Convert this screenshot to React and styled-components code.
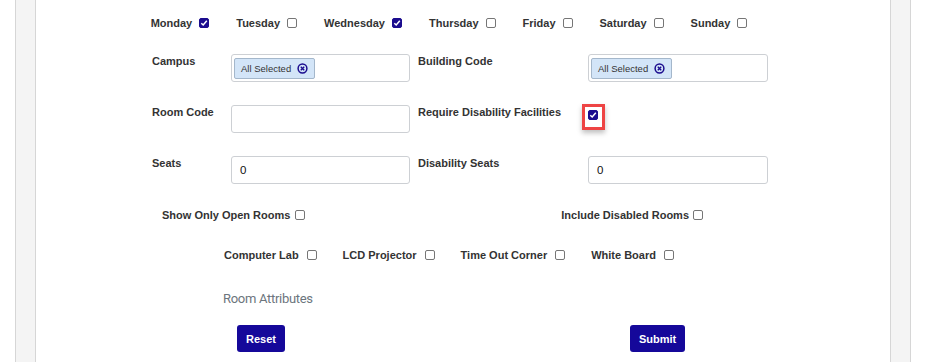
import React from 'react'
import styled, { createGlobalStyle } from 'styled-components'

const GlobalStyle = createGlobalStyle`
  body {
    margin: 0;
    background: #fff;
    font-family: "Liberation Sans", Arial, sans-serif;
  }
`

const Page = styled.div`
  padding: 0 16px 0 15px;
  height: 362px;
  overflow: hidden;
`

const Frame = styled.div`
  height: 100%;
  background: #f4f4f4;
  border-left: 1px solid #d6d6d6;
  border-right: 1px solid #d6d6d6;
  padding: 0 19px;
`

const Card = styled.div`
  height: 100%;
  background: #fff;
  border-left: 1px solid #d6d6d6;
  border-right: 1px solid #d6d6d6;
  padding-top: 15px;
  box-sizing: border-box;
`

const Form = styled.div`
  width: 638px;
  margin-left: 94px;
  display: flex;
  flex-direction: column;
`

const CheckRow = styled.div`
  display: flex;
  align-items: center;
  justify-content: ${({ $spread }) => ($spread ? 'space-between' : 'center')};
  gap: ${({ $gap }) => $gap || 27}px;
  height: 16px;
  margin-top: ${({ $top }) => $top || 0}px;
  padding: ${({ $pad }) => $pad || '0'};
`

const CheckItem = styled.label`
  display: flex;
  align-items: center;
  gap: ${({ $gap }) => $gap || 7}px;
  font-size: 11px;
  font-weight: bold;
  color: #333;
  white-space: nowrap;
`

const Box = styled.span`
  position: relative;
  display: inline-flex;
  align-items: center;
  justify-content: center;
  width: 10px;
  height: 10px;
  box-sizing: border-box;
  border-radius: 2px;
  border: 1px solid ${({ $checked }) => ($checked ? '#1b0c8e' : '#767676')};
  background: ${({ $checked }) => ($checked ? '#1b0c8e' : '#fff')};
`

const Highlight = styled.span`
  position: absolute;
  left: -7px;
  top: -7px;
  width: 23px;
  height: 26px;
  box-sizing: border-box;
  border: 3px solid #ee4444;
  box-shadow: 0 3px 5px rgba(0, 0, 0, 0.25);
`

const Checkbox = ({ checked, highlight }) => (
  <Box $checked={checked}>
    {checked && (
      <svg width="8" height="8" viewBox="0 0 8 8">
        <path d="M1.3 4.2 L3.2 6 L6.8 1.8" fill="none" stroke="#fff" strokeWidth="1.5" />
      </svg>
    )}
    {highlight && <Highlight />}
  </Box>
)

const Fields = styled.div`
  display: grid;
  grid-template-columns: 79px 179px 178px 180px;
  grid-template-rows: 28px 28px 28px;
  row-gap: 23px;
  padding-left: 22px;
  margin-top: 23px;
`

const FieldLabel = styled.div`
  font-size: 11px;
  font-weight: bold;
  color: #333;
  padding-top: 1px;
  padding-left: ${({ $inset }) => ($inset ? 8 : 0)}px;
`

const Input = styled.div`
  box-sizing: border-box;
  height: 28px;
  border: 1px solid #cdd0d4;
  border-radius: 3px;
  display: flex;
  align-items: center;
  padding: 0 ${({ $chip }) => ($chip ? 2 : 8)}px;
  font-size: 11.5px;
  color: #111;
`

const Chip = styled.span`
  display: inline-flex;
  align-items: center;
  gap: 6px;
  height: 21px;
  box-sizing: border-box;
  padding: 0 6px 0 6px;
  background: #d3e5f8;
  border: 1px solid #a4b7cb;
  border-radius: 2px;
  font-size: 9.5px;
  color: #333;
`

const CheckCell = styled.div`
  padding-top: 0;
`

const Section = styled.div`
  margin-top: 27px;
  margin-left: 93px;
  font-family: Roboto, "Liberation Sans", sans-serif;
  font-size: 13px;
  letter-spacing: -0.3px;
  color: #6c757d;
  line-height: 17px;
`

const Actions = styled.div`
  display: flex;
  gap: 345px;
  margin-top: 18px;
  padding-left: 107px;
`

const Button = styled.button`
  height: 27px;
  padding: 0 9px;
  border: none;
  border-radius: 3px;
  background: #15089a;
  color: #fff;
  font-family: "Liberation Sans", Arial, sans-serif;
  font-size: 11px;
  font-weight: bold;
`

const ClearIcon = () => (
  <svg width="11" height="11" viewBox="0 0 11 11">
    <circle cx="5.5" cy="5.5" r="4.4" fill="none" stroke="#1b0c8e" strokeWidth="1.5" />
    <path d="M3.8 3.8 L7.2 7.2 M7.2 3.8 L3.8 7.2" stroke="#1b0c8e" strokeWidth="1.4" />
  </svg>
)

const days = [
  ['Monday', true],
  ['Tuesday', false],
  ['Wednesday', true],
  ['Thursday', false],
  ['Friday', false],
  ['Saturday', false],
  ['Sunday', false],
]

const attributes = ['Computer Lab', 'LCD Projector', 'Time Out Corner', 'White Board']

export default function App() {
  return (
    <Page>
      <GlobalStyle />
      <Frame>
        <Card>
          <Form>
            <CheckRow>
              {days.map(([d, c]) => (
                <CheckItem key={d}>
                  {d} <Checkbox checked={c} />
                </CheckItem>
              ))}
            </CheckRow>

            <Fields>
              <FieldLabel>Campus</FieldLabel>
              <Input $chip>
                <Chip>All Selected <ClearIcon /></Chip>
              </Input>
              <FieldLabel $inset>Building Code</FieldLabel>
              <Input $chip>
                <Chip>All Selected <ClearIcon /></Chip>
              </Input>

              <FieldLabel>Room Code</FieldLabel>
              <Input />
              <FieldLabel $inset>Require Disability Facilities</FieldLabel>
              <CheckCell>
                <Checkbox checked highlight />
              </CheckCell>

              <FieldLabel>Seats</FieldLabel>
              <Input>0</Input>
              <FieldLabel $inset>Disability Seats</FieldLabel>
              <Input>0</Input>
            </Fields>

            <CheckRow $spread $top={23} $pad="0 65px 0 32px">
              <CheckItem $gap={5}>Show Only Open Rooms <Checkbox /></CheckItem>
              <CheckItem $gap={4}>Include Disabled Rooms <Checkbox /></CheckItem>
            </CheckRow>

            <CheckRow $top={24} $gap={26}>
              {attributes.map(a => (
                <CheckItem key={a} $gap={8}>
                  {a} <Checkbox />
                </CheckItem>
              ))}
            </CheckRow>

            <Section>Room Attributes</Section>

            <Actions>
              <Button>Reset</Button>
              <Button>Submit</Button>
            </Actions>
          </Form>
        </Card>
      </Frame>
    </Page>
  )
}
